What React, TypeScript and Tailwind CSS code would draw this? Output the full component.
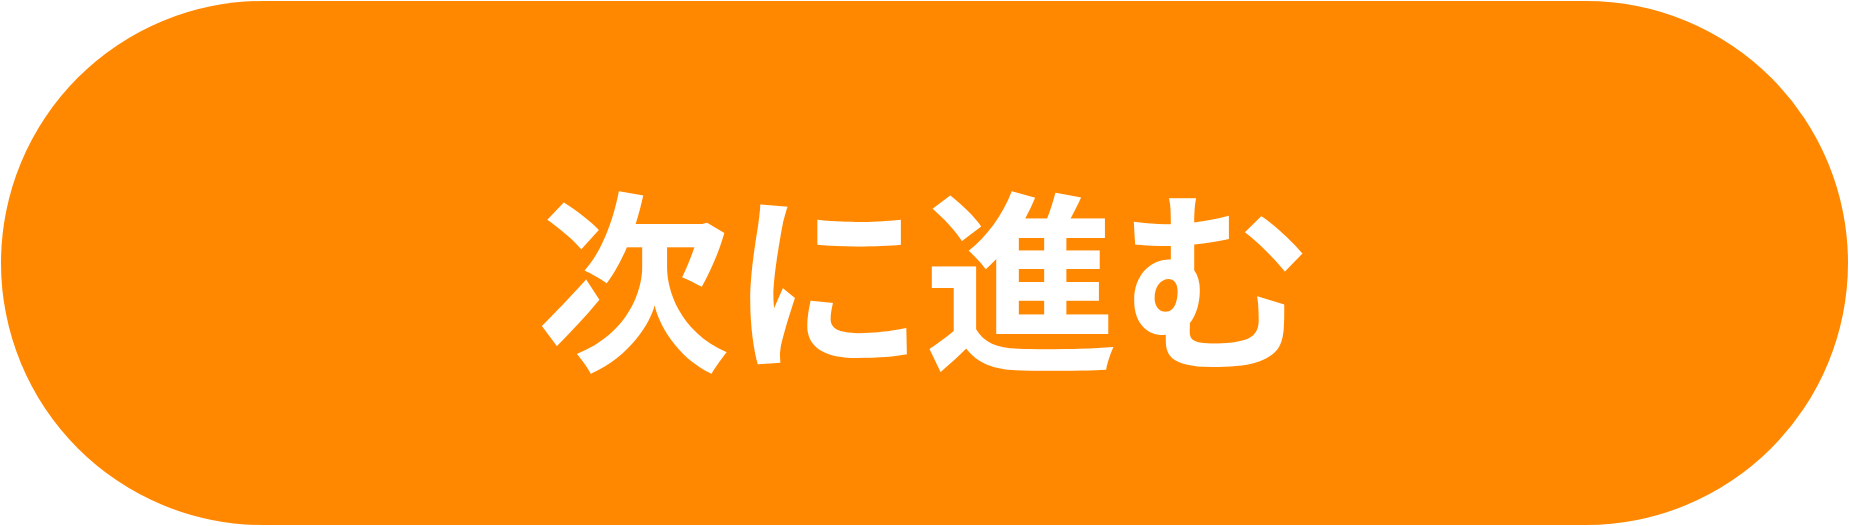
export default function App() {
  return (
    <div className="flex h-[526px] w-[1849px] bg-white p-px">
      <button
        type="button"
        className="flex flex-1 items-center justify-center rounded-full bg-[#ff8800] pt-[18px] text-[194px] font-bold leading-none text-white"
        style={{ fontFamily: '"Noto Sans CJK JP", "Noto Sans", sans-serif' }}
      >
        次に進む
      </button>
    </div>
  );
}
